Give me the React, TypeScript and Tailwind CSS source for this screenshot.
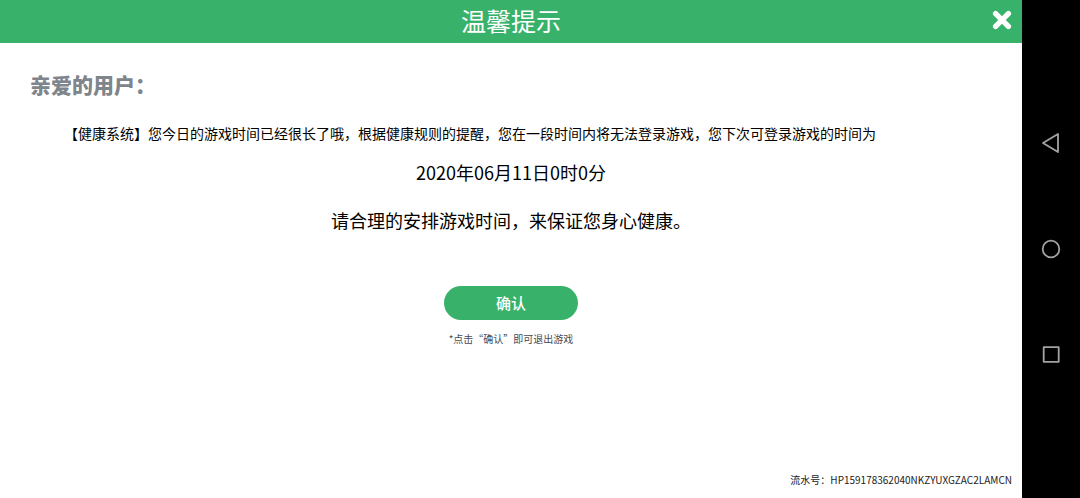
import React from "react";

function CloseIcon() {
  return (
    <svg viewBox="0 0 20 20" className="size-5" fill="none" stroke="#fff" strokeWidth="5.4" strokeLinecap="round" aria-hidden="true">
      <path d="M3.6 3.6 16.4 16.4M16.4 3.6 3.6 16.4" />
    </svg>
  );
}

function NavIcon({ children }: { children: React.ReactNode }) {
  return (
    <svg viewBox="0 0 22 22" className="size-[22px]" fill="none" stroke="#a3a3a3" strokeWidth="1.8" strokeLinejoin="round" aria-hidden="true">
      {children}
    </svg>
  );
}

export default function App() {
  return (
    <div className="flex min-h-screen bg-white font-['Noto_Sans_CJK_SC','Noto_Sans',sans-serif] text-black">
      <main className="flex min-w-0 flex-1 flex-col">
        <header className="grid h-[43px] grid-cols-[1fr_auto_1fr] items-center bg-[#38b26a] text-white">
          <h1 className="col-start-2 pb-1 text-[25px] leading-10">温馨提示</h1>
          <button type="button" aria-label="关闭" className="mr-[10px] mb-1 justify-self-end">
            <CloseIcon />
          </button>
        </header>

        <section className="flex flex-1 flex-col">
          <h2 className="mt-[26px] ml-[30px] text-[21px] leading-[30px] font-black text-[#7f858c]">亲爱的用户：</h2>
          <p className="mt-6 pl-16 text-[14px] leading-5">
            【健康系统】您今日的游戏时间已经很长了哦，根据健康规则的提醒，您在一段时间内将无法登录游戏，您下次可登录游戏的时间为
          </p>
          <p className="mt-[15px] text-center text-[18px] leading-7">2020年06月11日0时0分</p>
          <p className="mt-5 text-center text-[18px] leading-7">请合理的安排游戏时间，来保证您身心健康。</p>
          <div className="mt-[52px] flex flex-col items-center">
            <button type="button" className="h-[34px] w-[134px] rounded-full bg-[#38b26a] text-[15px] leading-8 font-medium text-white">
              确认
            </button>
            <p className="mt-[11px] text-[10px] leading-4 text-[#444b55]">*点击“确认”即可退出游戏</p>
          </div>
        </section>

        <footer className="pr-[10px] pb-[10px] text-right text-[10px] leading-4 text-[#222]">
          流水号：HP159178362040NKZYUXGZAC2LAMCN
        </footer>
      </main>

      <nav aria-label="系统导航" className="flex w-[58px] shrink-0 flex-col items-center justify-center gap-[84px] bg-black">
        <button type="button" aria-label="返回">
          <NavIcon>
            <path d="M18 2v18L3 11z" />
          </NavIcon>
        </button>
        <button type="button" aria-label="主屏幕">
          <NavIcon>
            <circle cx="11" cy="11" r="8.3" />
          </NavIcon>
        </button>
        <button type="button" aria-label="最近任务">
          <NavIcon>
            <rect x="3.7" y="3.2" width="15" height="14.6" />
          </NavIcon>
        </button>
      </nav>
    </div>
  );
}
